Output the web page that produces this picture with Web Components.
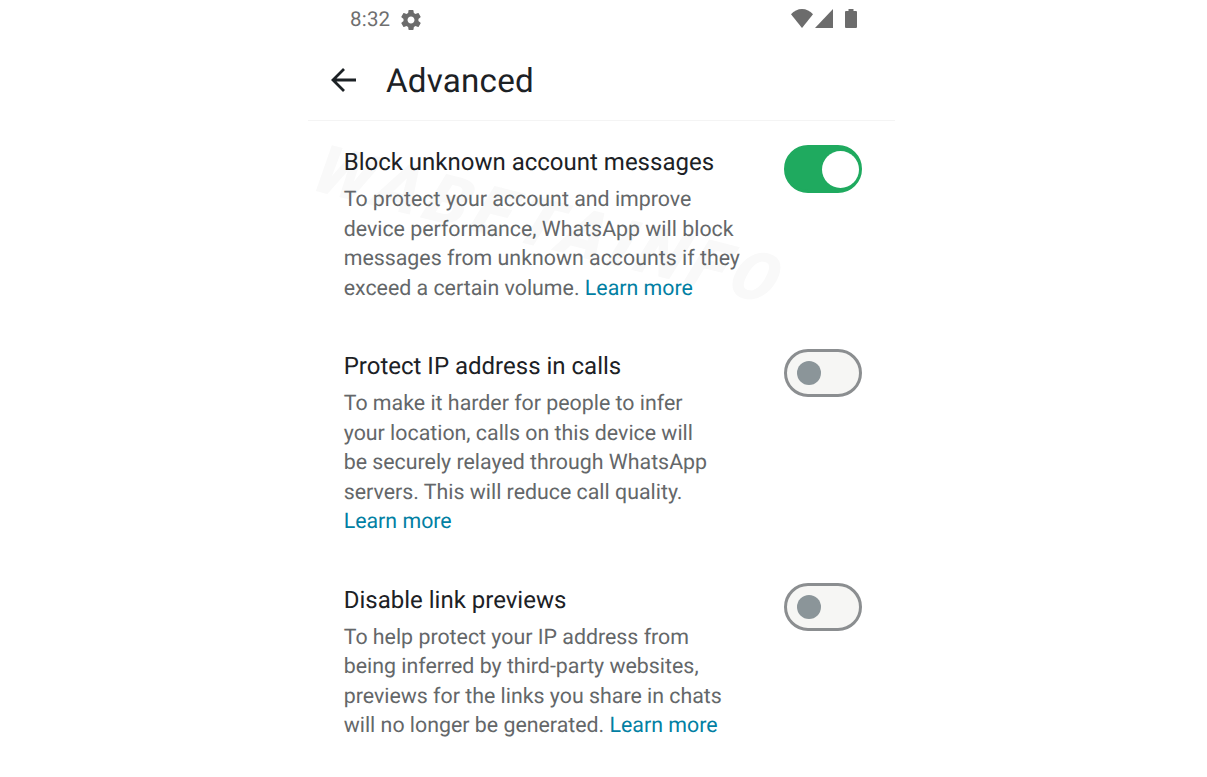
<!DOCTYPE html>
<html>
<head>
<meta charset="utf-8">
<title>Advanced</title>
<style>
  html, body { margin: 0; background: #fff; }
  body { font-family: Roboto, "Liberation Sans", sans-serif; height: 777px; overflow: hidden; text-rendering: geometricPrecision; }
</style>
</head>
<body>
<settings-screen>
  <status-bar slot="status"></status-bar>
  <app-bar slot="bar">Advanced</app-bar>
  <setting-row on>
    <span slot="title">Block unknown account messages</span>
    To protect your account and improve<br>device performance, WhatsApp will block<br>messages from unknown accounts if they<br>exceed a certain volume. <a>Learn more</a>
  </setting-row>
  <setting-row>
    <span slot="title">Protect IP address in calls</span>
    To make it harder for people to infer<br>your location, calls on this device will<br>be securely relayed through WhatsApp<br>servers. This will reduce call quality.<br><a>Learn more</a>
  </setting-row>
  <setting-row>
    <span slot="title">Disable link previews</span>
    To help protect your IP address from<br>being inferred by third-party websites,<br>previews for the links you share in chats<br>will no longer be generated. <a>Learn more</a>
  </setting-row>
</settings-screen>
<script>
class SettingsScreen extends HTMLElement {
  constructor() {
    super();
    this.attachShadow({ mode: 'open' });
    this.shadowRoot.innerHTML = `
      <style>
        :host { display: block; width: 587px; margin-left: 308px; position: relative; }
        .list { position: relative; display: flex; flex-direction: column; gap: 47px; padding: 25px 33px 0 35.7px; border-top: 1px solid #f4f4f4; }
        .mark {
          position: absolute; left: 22px; top: 136px; transform: rotate(14deg) skewX(-8deg); transform-origin: 0 0;
          font: italic 900 68px/1 Roboto, sans-serif; letter-spacing: 7px; color: #f9f9f9; white-space: nowrap;
        }
      </style>
      <div class="mark">WABETAINFO</div>
      <slot name="status"></slot>
      <slot name="bar"></slot>
      <div class="list"><slot></slot></div>
    `;
  }
}

class StatusBar extends HTMLElement {
  constructor() {
    super();
    this.attachShadow({ mode: 'open' });
    this.shadowRoot.innerHTML = `
      <style>
        :host { position: relative; display: flex; align-items: center; height: 39px; padding: 0 38px 0 42px; color: #6f6f6f; font-size: 20.5px; }
        .time { margin-right: 9px; letter-spacing: .2px; }
        .icons { margin-left: auto; display: flex; align-items: center; padding-bottom: 2px; }
        svg { display: block; fill: #6c6c6c; }
        .cell { margin: 0 12px 0 2px; }
      </style>
      <span class="time">8:32</span>
      <svg width="24" height="24" viewBox="0 0 24 24"><path d="M19.4 13c.04-.32.07-.65.07-1s-.03-.68-.07-1l2.1-1.65c.2-.15.25-.42.13-.64l-2-3.46c-.12-.22-.39-.3-.61-.22l-2.49 1c-.52-.4-1.08-.73-1.690-.98l-.38-2.65A.49.49 0 0 0 14 2h-4c-.25 0-.46.18-.49.42l-.38 2.65c-.61.25-1.17.59-1.69.98l-2.49-1c-.23-.09-.49 0-.61.22l-2 3.46c-.13.22-.07.49.12.64L4.57 11c-.04.32-.07.66-.07 1s.03.68.07 1l-2.11 1.65c-.19.15-.24.42-.12.64l2 3.46c.12.22.39.3.61.22l2.49-1c.52.4 1.08.73 1.69.98l.38 2.65c.03.24.24.42.49.42h4c.25 0 .46-.18.49-.42l.38-2.65c.61-.25 1.17-.59 1.69-.98l2.49 1c.23.09.49 0 .61-.22l2-3.46c.12-.22.07-.49-.12-.64L19.4 13zM12 15.5c-1.93 0-3.500-1.57-3.5-3.5s1.57-3.5 3.5-3.5 3.5 1.57 3.5 3.5-1.57 3.5-3.5 3.5z"/></svg>
      <div class="icons">
        <svg width="22" height="19" viewBox="0 0 22 19"><path d="M0 5.2C3 2 6.800 0 11 0s8 2 11 5.200L11 19z"/></svg>
        <svg class="cell" width="18" height="19" viewBox="0 0 18 19"><path d="M18 0v19H0z"/></svg>
        <svg width="12" height="19" viewBox="0 0 12 19"><path d="M3.500 0h5v2h2.500a1 1 0 0 1 1 1v15a1 1 0 0 1-1 1H1a1 1 0 0 1-1-1V3a1 1 0 0 1 1-1h2.500z"/></svg>
      </div>
    `;
  }
}

class AppBar extends HTMLElement {
  constructor() {
    super();
    this.attachShadow({ mode: 'open' });
    this.shadowRoot.innerHTML = `
      <style>
        :host { position: relative; display: flex; align-items: center; height: 81px; padding-left: 22px; gap: 28px; color: #1c2125; font-size: 33.2px; letter-spacing: .2px; }
        .label { padding-top: 3px; }
        svg { display: block; fill: none; stroke: #1c2125; stroke-width: 2.8; }
      </style>
      <svg width="28" height="28" viewBox="0 0 28 28"><path d="M26 14H3M14 3 3 14l11 11"/></svg>
      <span class="label"><slot></slot></span>
    `;
  }
}

class SettingRow extends HTMLElement {
  constructor() {
    super();
    this.attachShadow({ mode: 'open' });
    this.shadowRoot.innerHTML = `
      <style>
        :host { display: flex; justify-content: space-between; align-items: flex-start; }
        .title { color: #1c2125; font-size: 24px; line-height: 32px; margin-bottom: 7px; }
        .desc { color: #646769; font-size: 21.35px; line-height: 29.5px; white-space: nowrap; }
        ::slotted(a) { color: #027fa3; }
        .switch {
          box-sizing: border-box; width: 78px; height: 48px; margin-top: -1px; border-radius: 24px; flex: none;
          display: flex; align-items: center; background: #f6f6f4; border: 3px solid #8b8e90; padding: 0 9.500px;
        }
        .knob { width: 24px; height: 24px; border-radius: 50%; background: #8b9599; }
        :host([on]) .switch { background: #1faa5f; border-color: #1faa5f; justify-content: flex-end; padding: 0 .5px; }
        :host([on]) .knob { width: 37px; height: 37px; background: #fff; }
      </style>
      <div>
        <div class="title"><slot name="title"></slot></div>
        <div class="desc"><slot></slot></div>
      </div>
      <div class="switch"><div class="knob"></div></div>
    `;
  }
}

customElements.define('settings-screen', SettingsScreen);
customElements.define('status-bar', StatusBar);
customElements.define('app-bar', AppBar);
customElements.define('setting-row', SettingRow);
</script>
</body>
</html>
